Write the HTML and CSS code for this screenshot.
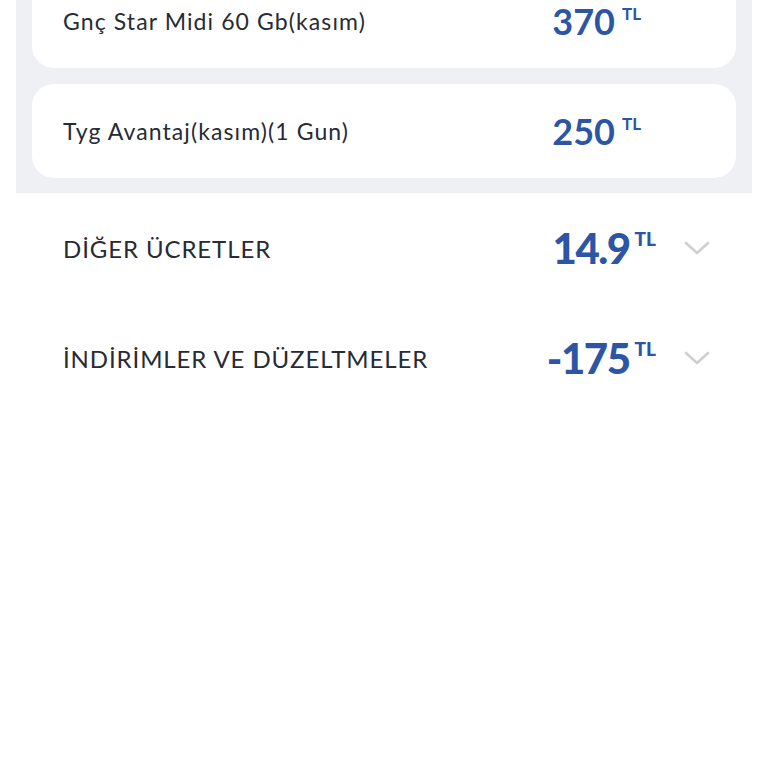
FILE: index.html
```html
<!DOCTYPE html>
<html lang="tr">

<head>
    <meta charset="UTF-8">
    <meta name="viewport" content="width=device-width, initial-scale=1.0">
    <title>Fatura Detayı</title>
    <link rel="stylesheet" href="styles.css">
</head>

<body>

    <div class="panel">
        <div class="card">
            <span class="card-name">Gnç Star Midi 60 Gb(kasım)</span>
            <span class="card-price">370<sup>TL</sup></span>
        </div>
        <div class="card">
            <span class="card-name">Tyg Avantaj(kasım)(1 Gun)</span>
            <span class="card-price">250<sup>TL</sup></span>
        </div>
    </div>

    <div class="row">
        <span class="row-name">DİĞER ÜCRETLER</span>
        <span class="row-price">14.9<sup>TL</sup></span>
        <svg class="chevron" width="26" height="14" viewBox="0 0 26 14">
            <path d="M2 2 L13 12 L24 2" fill="none" stroke="#cfcfcf" stroke-width="2.6" stroke-linecap="round" stroke-linejoin="round" />
        </svg>
    </div>
    <div class="row">
        <span class="row-name">İNDİRİMLER VE DÜZELTMELER</span>
        <span class="row-price">-175<sup>TL</sup></span>
        <svg class="chevron" width="26" height="14" viewBox="0 0 26 14">
            <path d="M2 2 L13 12 L24 2" fill="none" stroke="#cfcfcf" stroke-width="2.6" stroke-linecap="round" stroke-linejoin="round" />
        </svg>
    </div>

</body>

</html>
```

FILE: styles.css
```css
body {
    margin: 0;
    background: #ffffff;
    font-family: 'Lato', 'Noto Sans', sans-serif;
    color: #262b36;
}

.panel {
    margin: -42px 16px 0;
    padding: 16px 16px 15px;
    background: #eef0f3;
    display: flex;
    flex-direction: column;
    gap: 16px;
}

.card {
    height: 94px;
    padding: 0 95px 0 31px;
    background: #ffffff;
    border-radius: 22px;
    display: flex;
    align-items: center;
    justify-content: space-between;
}

.card-name {
    font-size: 23px;
    letter-spacing: 1.1px;
}

.card-price {
    font-size: 36px;
    font-weight: 700;
    color: #2c55a6;
}

.card-price sup,
.row-price sup {
    font-size: 17px;
    letter-spacing: 0;
    margin-left: 7px;
    vertical-align: 15px;
}

.row {
    height: 110px;
    padding: 0 58px 0 63px;
    display: flex;
    align-items: center;
}

.row:first-of-type {
    margin-top: 4px;
}

.row-name {
    flex: 1;
    font-size: 24px;
    letter-spacing: 0.9px;
}

.row-price {
    font-size: 42px;
    font-weight: 900;
    color: #2c55a6;
    letter-spacing: -1.5px;
}

.row-price sup {
    font-size: 19px;
    margin-left: 5px;
    vertical-align: 18px;
}

.chevron {
    margin-left: 28px;
}
```
